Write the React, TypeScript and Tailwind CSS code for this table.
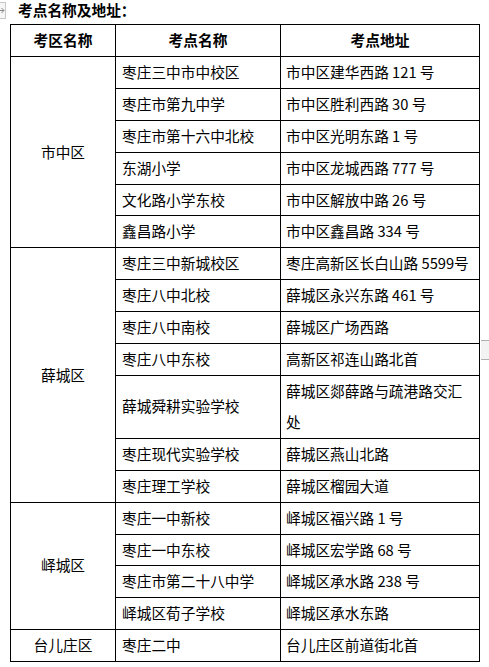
import React from 'react'

type Row = { name: string; addr: string }
type Group = { area: string; rows: Row[] }

const GROUPS: Group[] = [
  {
    area: '市中区',
    rows: [
      { name: '枣庄三中市中校区', addr: '市中区建华西路 121 号' },
      { name: '枣庄市第九中学', addr: '市中区胜利西路 30 号' },
      { name: '枣庄市第十六中北校', addr: '市中区光明东路 1 号' },
      { name: '东湖小学', addr: '市中区龙城西路 777 号' },
      { name: '文化路小学东校', addr: '市中区解放中路 26 号' },
      { name: '鑫昌路小学', addr: '市中区鑫昌路 334 号' },
    ],
  },
  {
    area: '薛城区',
    rows: [
      { name: '枣庄三中新城校区', addr: '枣庄高新区长白山路 5599号' },
      { name: '枣庄八中北校', addr: '薛城区永兴东路 461 号' },
      { name: '枣庄八中南校', addr: '薛城区广场西路' },
      { name: '枣庄八中东校', addr: '高新区祁连山路北首' },
      { name: '薛城舜耕实验学校', addr: '薛城区郯薛路与疏港路交汇处' },
      { name: '枣庄现代实验学校', addr: '薛城区燕山北路' },
      { name: '枣庄理工学校', addr: '薛城区榴园大道' },
    ],
  },
  {
    area: '峄城区',
    rows: [
      { name: '枣庄一中新校', addr: '峄城区福兴路 1 号' },
      { name: '枣庄一中东校', addr: '峄城区宏学路 68 号' },
      { name: '枣庄市第二十八中学', addr: '峄城区承水路 238 号' },
      { name: '峄城区荀子学校', addr: '峄城区承水东路' },
    ],
  },
  {
    area: '台儿庄区',
    rows: [{ name: '枣庄二中', addr: '台儿庄区前道街北首' }],
  },
]

const font = { fontFamily: '"Noto Sans CJK SC", "Noto Sans", sans-serif' }

export default function App() {
  return (
    <div className="relative w-[489px] h-[667px] bg-white text-black overflow-hidden" style={font}>
      {/* Word-style paragraph marker, cut off at the left edge */}
      <div className="absolute left-[-3px] top-[2px] w-[9px] h-[17px] border border-[#c8c8c8] bg-[#f6f6f6] flex items-center justify-end">
        <svg width="7" height="7" viewBox="0 0 7 7" className="text-[#8a8a8a]">
          <path d="M0 3.5h6M3.5 1l2.5 2.5L3.5 6" fill="none" stroke="currentColor" strokeWidth="1" />
        </svg>
      </div>

      {/* scroll handle on the right edge */}
      <div className="absolute right-0 top-[340px] w-[8px] h-[20px] bg-[#f3f3f3] border-t border-b border-[#b0b0b0]" />

      <div className="h-[24px] pl-[18px] text-[14.7px] font-semibold leading-[20px]">考点名称及地址：</div>

      <table className="ml-[10px] border-collapse text-[14.7px] leading-[30.9px]">
        <colgroup>
          <col className="w-[105px]" />
          <col className="w-[165px]" />
          <col className="w-[199px]" />
        </colgroup>
        <thead>
          <tr>
            <th className="border border-black font-semibold text-center p-0">考区名称</th>
            <th className="border border-black font-semibold text-center p-0">考点名称</th>
            <th className="border border-black font-semibold text-center p-0">考点地址</th>
          </tr>
        </thead>
        <tbody>
          {GROUPS.map((g) =>
            g.rows.map((r, i) => (
              <tr key={g.area + r.name}>
                {i === 0 && (
                  <td rowSpan={g.rows.length} className="border border-black text-center align-middle p-0">
                    {g.area}
                  </td>
                )}
                <td className="border border-black pl-[6px] pr-[4px] py-0">{r.name}</td>
                <td className="border border-black pl-[5px] pr-[6px] py-0">{r.addr}</td>
              </tr>
            ))
          )}
        </tbody>
      </table>
    </div>
  )
}
